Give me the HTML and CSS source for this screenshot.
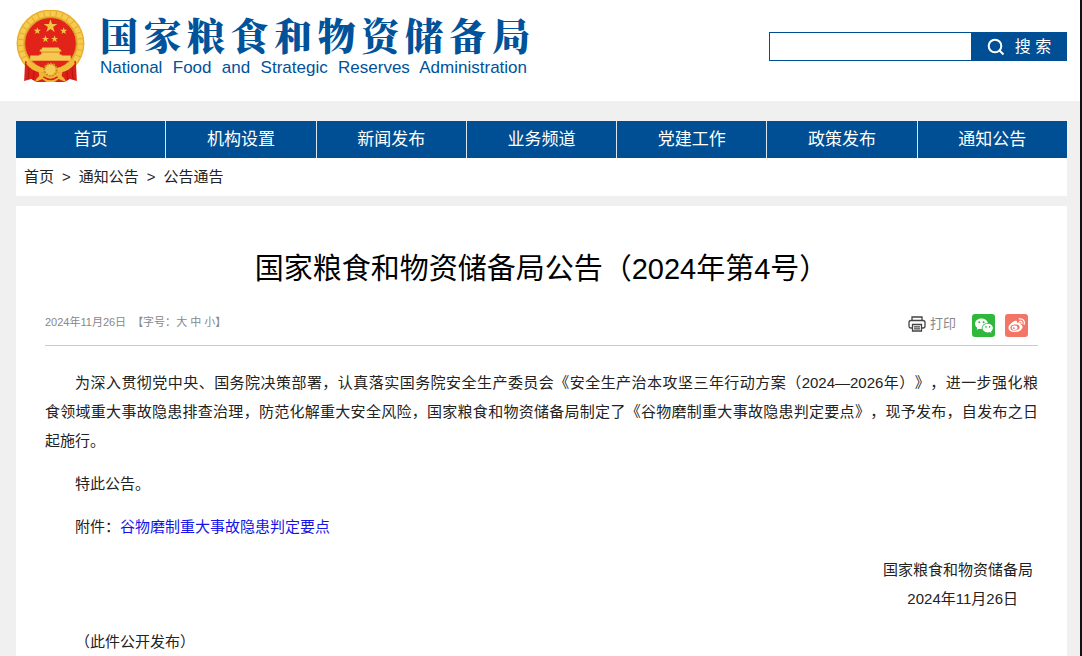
FILE: index.html
```
<!DOCTYPE html>
<html lang="zh-CN">
<head>
    <meta charset="UTF-8">
    <meta name="viewport" content="width=device-width, initial-scale=1">
    <title>国家粮食和物资储备局公告（2024年第4号）</title>
    <link rel="stylesheet" href="styles.css">
</head>
<body>
    <header class="header">
        <a class="brand" href="#">
            <svg class="emblem" viewBox="0 0 68 72" aria-hidden="true">
                <circle cx="34" cy="33" r="33.5" fill="#e9b030"/>
                <circle cx="34" cy="33" r="29.5" fill="none" stroke="#f6cb50" stroke-width="5"/>
                <circle cx="34" cy="33" r="29.5" fill="none" stroke="#e5ab2c" stroke-width="5" stroke-dasharray="1 5"/>
                <circle cx="34" cy="33" r="25.5" fill="#e2231a" stroke="#d9a127" stroke-width="1"/>
                <path d="M34 9 L35.6 13.8 L40.7 13.8 L36.6 16.8 L38.1 21.7 L34 18.7 L29.9 21.7 L31.4 16.8 L27.3 13.8 L32.4 13.8 Z" fill="#f3c544"/>
                <g fill="#f3c544">
                    <path id="star" d="M21 17 l.9 2.5 2.6 0 -2.1 1.6 .8 2.6 -2.2 -1.6 -2.2 1.6 .8 -2.6 -2.1 -1.6 2.6 0 Z"/>
                    <use href="#star" x="26"/>
                    <use href="#star" x="8" y="8"/>
                    <use href="#star" x="17" y="8"/>
                </g>
                <path d="M26 37 h16 l1 2 h1 l1 2 h-2 v3 h2 v1 h9 v5 H14 v-5 h9 v-1 h2 v-3 h-2 l1 -2 h1 Z" fill="#f5c851"/>
                <path d="M25 41.5 h18" stroke="#d98a22" stroke-width="1"/>
                <path d="M9 50 Q19 58 34 58 Q49 58 59 50 L60 70 L53 68 L48 71 H20 L15 68 L8 70 Z" fill="#dc1f18"/>
                <path d="M13 54 L12 68 M18 58 L17 69 M55 54 L56 68 M50 58 L51 69" stroke="#b51611" stroke-width="1"/>
                <path d="M12 49 Q22 58 34 58 Q46 58 56 49 L58 53 Q53 60 43 62 H25 Q15 60 10 53 Z" fill="#f1bd39"/>
                <path d="M22 60 Q28 64 34 60 Q40 64 46 60 L45 65 Q49 68 49 71 L42 68 L38 71 H30 L26 68 L19 71 Q19 68 23 65 Z" fill="#f0b735"/>
                <circle cx="34" cy="59" r="6" fill="#f5cb55" stroke="#d0901f" stroke-width="2" stroke-dasharray="2 1"/>
                <path d="M27 66 Q34 71 41 66" fill="none" stroke="#dc1f18" stroke-width="1.5"/>
            </svg>
            <span class="brand-text">
                <span class="brand-cn">国家粮食和物资储备局</span>
                <span class="brand-en">National Food and Strategic Reserves Administration</span>
            </span>
        </a>
        <form class="search" role="search">
            <input class="search-input" type="text" aria-label="搜索">
            <button class="search-button" type="submit">
                <svg class="search-icon" viewBox="0 0 18 18" aria-hidden="true">
                    <circle cx="8" cy="8" r="6.3"/>
                    <path d="M12.5 12.5 L16.5 16.5"/>
                </svg>
                搜 索
            </button>
        </form>
    </header>

    <div class="container">
        <nav class="nav">
            <a href="#">首页</a>
            <a href="#">机构设置</a>
            <a href="#">新闻发布</a>
            <a href="#">业务频道</a>
            <a href="#">党建工作</a>
            <a href="#">政策发布</a>
            <a href="#">通知公告</a>
        </nav>
        <div class="breadcrumb">
            <a href="#">首页</a>
            <span>&gt;</span>
            <a href="#">通知公告</a>
            <span>&gt;</span>
            <a href="#">公告通告</a>
        </div>

        <main class="article">
            <h1>国家粮食和物资储备局公告（2024年第4号）</h1>
            <div class="meta">
                <div class="meta-info">
                    <span>2024年11月26日</span>
                    <span>【字号：<button type="button">大</button> <button type="button">中</button> <button type="button">小</button>】</span>
                </div>
                <div class="tools">
                    <button class="print" type="button">
                        <svg class="print-icon" viewBox="0 0 18 16" aria-hidden="true">
                            <path d="M4 4.5 V1 H14 V4.5 M4 12 H3 Q1 12 1 10 V6.5 Q1 4.5 3 4.5 H15 Q17 4.5 17 6.5 V10 Q17 12 15 12 H14"/>
                            <path d="M4.5 8.5 H13.5 V15 H4.5 Z M6 10.8 H12 M6 12.8 H12"/>
                        </svg>
                        打印
                    </button>
                    <a class="share wechat" href="#" aria-label="微信">
                        <svg viewBox="0 0 23 23" aria-hidden="true">
                            <path d="M9.5 4.5 C5.8 4.5 3 6.8 3 9.8 C3 11.5 3.9 12.9 5.3 13.8 L4.8 15.8 L7.2 14.7 C8 15 9 15.1 9.8 15 C9.3 11.6 12.1 8.8 15.9 8.9 C15.2 6.2 12.7 4.5 9.5 4.5 Z" fill="#fff"/>
                            <path d="M15.7 9.8 C12.7 9.8 10.5 11.7 10.5 14.1 C10.5 16.5 12.7 18.4 15.7 18.4 C16.4 18.4 17 18.3 17.6 18.1 L19.4 19.1 L19 17.4 C20.2 16.6 20.9 15.4 20.9 14.1 C20.9 11.7 18.7 9.8 15.7 9.8 Z" fill="#fff"/>
                            <g fill="#2fb83b">
                                <circle cx="7.3" cy="8.3" r="1"/>
                                <circle cx="11.6" cy="8.3" r="1"/>
                                <circle cx="14" cy="12.9" r=".8"/>
                                <circle cx="17.5" cy="12.9" r=".8"/>
                            </g>
                        </svg>
                    </a>
                    <a class="share weibo" href="#" aria-label="微博">
                        <svg viewBox="0 0 23 23" aria-hidden="true">
                            <path d="M9.7 7 C11.3 6.3 12.5 6.9 12 9 C14.5 8.1 16.3 8.7 15.6 10.8 C17.4 11.3 18 12.4 17.4 13.9 C16.4 16.5 13.3 18.1 9.8 18.1 C6.2 18.1 3.5 16.4 3.5 13.8 C3.5 11.3 6.7 8.2 9.7 7 Z" fill="#fff"/>
                            <ellipse cx="10" cy="13.5" rx="4.6" ry="3" transform="rotate(-8 10 13.5)" fill="#f27565"/>
                            <ellipse cx="9.6" cy="13.7" rx="2.8" ry="2.3" fill="#fff"/>
                            <circle cx="8.9" cy="14.1" r=".9" fill="#f27565"/>
                            <path d="M14.3 4.9 C17.8 4.2 20.3 7.1 19.2 10.4 M14.8 7.3 C16.4 7 17.4 8.2 16.9 9.7" fill="none" stroke="#fff" stroke-width="1.3" stroke-linecap="round"/>
                        </svg>
                    </a>
                </div>
            </div>

            <div class="content">
                <p>为深入贯彻党中央、国务院决策部署，认真落实国务院安全生产委员会《安全生产治本攻坚三年行动方案（2024—2026年）》，进一步强化粮<span class="keep">食领域</span>重大事故隐患排查治理，防范化解重大安全风险，国家粮食和物资储备局制定了《谷物磨制重大事故隐患判定要点》，现予发布，自发布之日<span class="keep">起施行。</span></p>
                <p>特此公告。</p>
                <p>附件：<a href="#">谷物磨制重大事故隐患判定要点</a></p>
                <div class="signature">
                    <div>国家粮食和物资储备局</div>
                    <div>2024年11月26日</div>
                </div>
                <p>（此件公开发布）</p>
            </div>
        </main>
    </div>
</body>
</html>
```
FILE: styles.css
```
* {
    box-sizing: border-box;
}

body {
    margin: 0;
    min-height: 100vh;
    background: #f0f0f0;
    border-right: 2px solid #111;
    font-family: "Liberation Sans", "Noto Sans CJK SC", sans-serif;
    font-size: 15px;
    color: #222;
    text-spacing-trim: space-all;
}

a {
    color: inherit;
    text-decoration: none;
}

button {
    padding: 0;
    border: none;
    background: none;
    font: inherit;
    color: inherit;
    cursor: pointer;
}

.header {
    display: flex;
    justify-content: space-between;
    align-items: flex-start;
    padding: 10px 13px 0 16px;
    height: 101px;
    background: #fff;
}

.brand {
    display: flex;
    gap: 15px;
    color: #00529a;
}

.emblem {
    width: 69px;
    height: 73px;
}

.brand-text {
    display: flex;
    flex-direction: column;
    width: 430px;
    text-align: justify;
    text-align-last: justify;
}

.brand-cn {
    font-family: "Noto Serif CJK SC", "Noto Sans CJK SC", serif;
    font-size: 38px;
    font-weight: 900;
    line-height: 48px;
}

.brand-en {
    padding-right: 3px;
    font-size: 17px;
    line-height: 20px;
}

.search {
    display: flex;
    margin-top: 22px;
    height: 29px;
}

.search-input {
    width: 202px;
    padding: 0 8px;
    border: 1px solid #004f95;
    border-right: none;
    border-radius: 0;
    font: inherit;
    outline: none;
}

.search-button {
    display: flex;
    justify-content: center;
    align-items: center;
    gap: 10px;
    width: 96px;
    background: #004f95;
    color: #fff;
    font-size: 16px;
    line-height: 26px;
}

.search-icon {
    width: 18px;
    height: 18px;
    fill: none;
    stroke: #fff;
    stroke-width: 2;
}

.container {
    margin: 20px 13px 0 16px;
}

.nav {
    display: flex;
    background: #004f95;
}

.nav a {
    flex: 1;
    text-align: center;
    font-size: 17px;
    line-height: 37px;
    color: #fff;
}

.nav a + a {
    border-left: 1px solid #dce6ef;
}

.breadcrumb {
    display: flex;
    gap: 8px;
    padding: 0 8px;
    background: #fff;
    line-height: 38px;
}

.article {
    margin-top: 10px;
    padding: 40px 29px 0;
    background: #fff;
}

h1 {
    margin: 0;
    text-align: center;
    font-size: 29px;
    font-weight: 400;
    line-height: 46px;
    color: #000;
}

.meta {
    display: flex;
    justify-content: space-between;
    align-items: flex-start;
    padding-top: 14px;
    height: 54px;
    border-bottom: 1px solid #ccc;
    color: #888;
}

.meta-info {
    display: flex;
    gap: 6px;
    font-size: 11px;
    line-height: 32px;
}

.tools {
    display: flex;
    align-items: flex-start;
    gap: 10px;
    margin-top: 8px;
    padding-right: 10px;
}

.print {
    display: flex;
    align-items: center;
    gap: 4px;
    margin-right: 6px;
    font-size: 13px;
    line-height: 20px;
}

.print-icon {
    width: 18px;
    height: 16px;
    fill: none;
    stroke: #444;
    stroke-width: 1.3;
}

.share {
    width: 23px;
    height: 23px;
    border-radius: 3px;
}

.share svg {
    display: block;
}

.wechat {
    background: #2fb83b;
}

.weibo {
    background: #f27565;
}

.content {
    padding-top: 22px;
    line-height: 29px;
    text-align: justify;
}

.content p {
    margin: 0 0 14px;
    text-indent: 2em;
}

.content p:last-child {
    margin-bottom: 0;
}

.content a {
    color: #1414e6;
}

.keep {
    white-space: nowrap;
}

.signature {
    display: flex;
    flex-direction: column;
    align-items: flex-end;
    margin-bottom: 14px;
    padding-right: 5px;
}

.signature div:last-child {
    padding-right: 15px;
}
```
